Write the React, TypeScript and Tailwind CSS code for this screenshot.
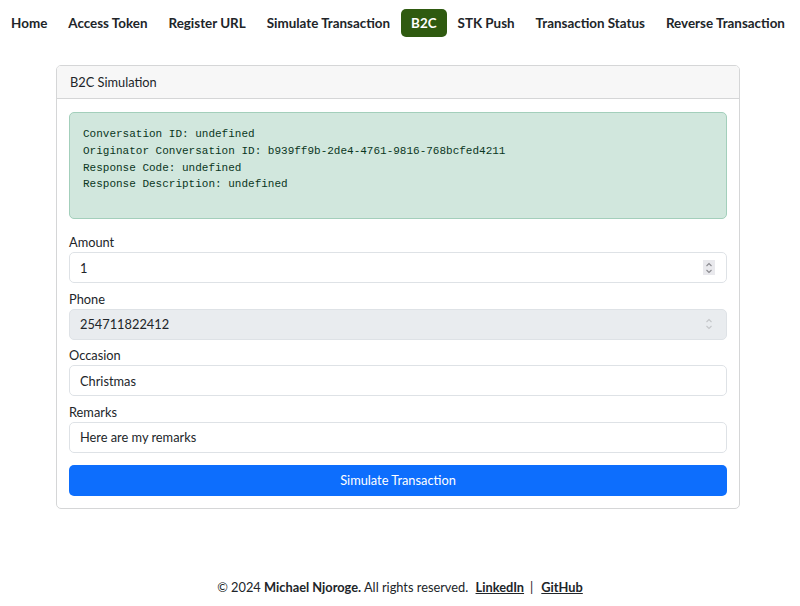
const navLinks = [
  'Home',
  'Access Token',
  'Register URL',
  'Simulate Transaction',
  'B2C',
  'STK Push',
  'Transaction Status',
  'Reverse Transaction',
];

const result = [
  'Conversation ID: undefined',
  'Originator Conversation ID: b939ff9b-2de4-4761-9816-768bcfed4211',
  'Response Code: undefined',
  'Response Description: undefined',
];

// number spinner, drawn so it shows the same as the screenshot
const Spinner = ({ disabled }: { disabled?: boolean }) => (
  <span
    className={`absolute right-[12px] top-[8px] w-[12px] h-[15px] flex items-center justify-center ${
      disabled ? 'bg-transparent' : 'bg-[#e9e9ed]'
    }`}
  >
    <svg width="8" height="12" viewBox="0 0 8 12" fill="none">
      <path
        d="M1.5 4 L4 1.5 L6.5 4 M1.5 8 L4 10.5 L6.5 8"
        stroke={disabled ? '#c4c6c9' : '#8a8a8f'}
        strokeWidth="1.1"
      />
    </svg>
  </span>
);

const Field = ({
  label,
  value,
  spinner = false,
  disabled = false,
  last = false,
}: {
  label: string;
  value: string;
  spinner?: boolean;
  disabled?: boolean;
  last?: boolean;
}) => (
  <div className={last ? 'mb-[12.5px]' : 'mb-[5.6px]'}>
    <label className="block leading-[20px] text-[#212529]">{label}</label>
    <div className="relative">
      <input
        type="text"
        defaultValue={value}
        disabled={disabled}
        className={`block w-full h-[31px] px-[10px] border border-[#dee2e6] rounded-[5px] text-[#212529] outline-none ${
          disabled ? 'bg-[#e9ecef]' : 'bg-white'
        }`}
      />
      {spinner && <Spinner disabled={disabled} />}
    </div>
  </div>
);

const App = () => {
  return (
    <div
      className="min-h-screen flex flex-col bg-white text-[12.8px] text-[#212529]"
      style={{ fontFamily: 'Lato, "Noto Sans", sans-serif' }}
    >
      {/* Navigation */}
      <nav className="flex justify-center gap-[1px] pt-[9px] pr-[4px] text-[13.4px] whitespace-nowrap">
        {navLinks.map((link) =>
          link === 'B2C' ? (
            <span
              key={link}
              className="shrink-0 px-[10px] h-[28px] pt-[1px] flex items-center rounded-[5px] bg-[#2f5a10] text-white font-bold"
            >
              {link}
            </span>
          ) : (
            <span
              key={link}
              className="shrink-0 px-[10px] h-[28px] pt-[1px] flex items-center font-bold text-[#212529]"
            >
              {link}
            </span>
          )
        )}
      </nav>

      {/* Card */}
      <div className="pl-[56px] pr-[60px] mt-[28px]">
        <div className="border border-[#d5d6d7] rounded-[5px] overflow-hidden">
          <div className="bg-[#f7f7f7] border-b border-[#d5d6d7] px-[13px] h-[33px] pt-[1px] flex items-center">
            B2C Simulation
          </div>
          <div className="px-[12px] pt-[13px] pb-[12px]">
            <div className="bg-[#d1e7dd] border border-[#a3cfbb] rounded-[5px] px-[13px] pt-[13px] pb-[25px] mb-[13px]">
              <pre
                className="text-[11px] leading-[16.8px] text-[#0a3622]"
                style={{ fontFamily: '"Liberation Mono", monospace' }}
              >
                {result.join('\n')}
              </pre>
            </div>
            <Field label="Amount" value="1" spinner />
            <Field label="Phone" value="254711822412" spinner disabled />
            <Field label="Occasion" value="Christmas" />
            <Field label="Remarks" value="Here are my remarks" last />
            <button className="w-full h-[31px] rounded-[5px] bg-[#0d6efd] text-white">
              Simulate Transaction
            </button>
          </div>
        </div>
      </div>

      {/* Footer */}
      <footer className="mt-auto pb-[9px] text-center leading-[19px]">
        © 2024 <strong>Michael Njoroge.</strong> All rights reserved.{' '}
        <a href="#" className="ml-[4px] font-bold underline text-[#212529]">LinkedIn</a>
        <span className="mx-[6px]">|</span>
        <a href="#" className="ml-[2px] font-bold underline text-[#212529]">GitHub</a>
      </footer>
    </div>
  );
};

export default App;
